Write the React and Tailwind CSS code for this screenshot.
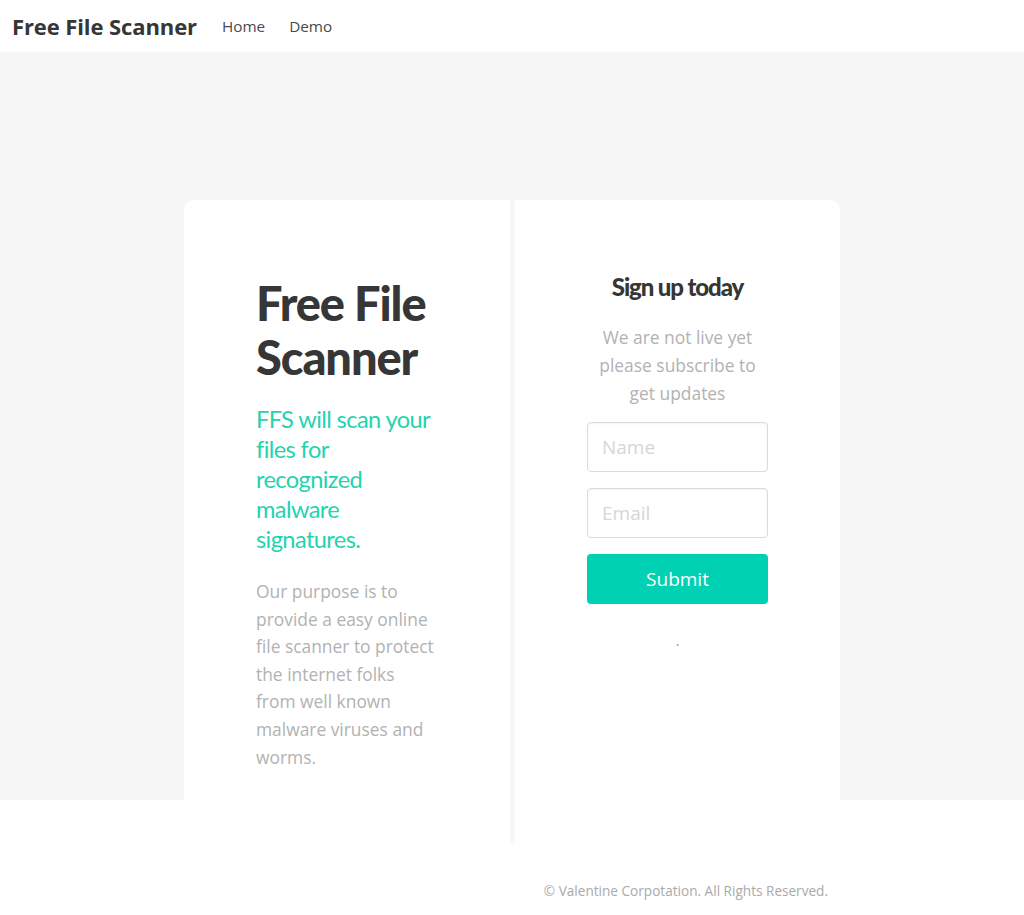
import React from 'react';

const font = { fontFamily: '"Open Sans", "Noto Sans", sans-serif' };
const lato = { fontFamily: 'Lato, sans-serif' };

const inputClass =
  'h-[50px] w-full rounded-[4px] border border-[#dbdbdb] px-[14px] text-[19px] text-[#363636] placeholder:text-[#d6d6d6] shadow-[inset_0_1px_2px_rgba(10,10,10,0.05)] outline-none';

const App = () => {
  return (
    <div className="min-h-screen bg-white text-[#4a4a4a]" style={font}>
      {/* Navbar */}
      <nav className="h-[52px] flex items-center bg-white">
        <a className="pl-3 pr-[13px] text-[22px] font-bold text-[#363636] tracking-[-0.1px]">Free File Scanner</a>
        <a className="px-3 text-[15.3px] text-[#4a4a4a]">Home</a>
        <a className="px-3 text-[15.3px] text-[#4a4a4a]">Demo</a>
      </nav>

      {/* Hero */}
      <section className="bg-[#f7f7f7] h-[748px] pt-[148px]">
        <div className="mx-auto w-[656px] flex gap-[5px] bg-[#f7f7f7]">
          {/* Left */}
          <div className="w-[326px] h-[643px] bg-white rounded-tl-[10px] px-[72px] pt-[76px]">
            <h1 className="text-[47px] font-black leading-[54px] text-[#363636] tracking-[-1.1px]" style={lato}>
              Free File Scanner
            </h1>
            <h2 className="mt-[20px] text-[23.6px] leading-[30px] text-[#1fd4ae] tracking-[-0.6px]" style={lato}>
              FFS will scan your files for recognized malware signatures.
            </h2>
            <p className="mt-[24px] text-[17.4px] leading-[27.6px] text-[#b2b2b2]">
              Our purpose is to provide a easy online file scanner to protect the internet folks from well known malware viruses and worms.
            </p>
          </div>

          {/* Right */}
          <div className="w-[325px] h-[643px] bg-white rounded-tr-[10px] px-[72px] pt-[70px] text-center">
            <h3 className="text-[24px] font-black leading-[34px] text-[#363636] tracking-[-1.1px]" style={lato}>
              Sign up today
            </h3>
            <p className="mt-[19px] text-[17.4px] leading-[28px] text-[#b2b2b2]">
              We are not live yet please subscribe to get updates
            </p>
            <form className="mt-[15px] flex flex-col gap-[16px]">
              <input type="text" placeholder="Name" className={inputClass} />
              <input type="email" placeholder="Email" className={inputClass} />
              <button type="button" className="h-[50px] w-full rounded-[4px] bg-[#00d1b2] text-white text-[19px]">
                Submit
              </button>
            </form>
            <p className="mt-[27px] text-[14px] leading-[20px] text-[#999]">.</p>
          </div>
        </div>
      </section>

      {/* Footer */}
      <footer className="h-[115px] flex items-end">
        <div className="mx-auto w-[656px] flex justify-end pb-[14px] pr-[12px]">
          <p className="text-[13.6px] text-[#aaaaaa]">© Valentine Corpotation. All Rights Reserved.</p>
        </div>
      </footer>
    </div>
  );
};

export default App;
